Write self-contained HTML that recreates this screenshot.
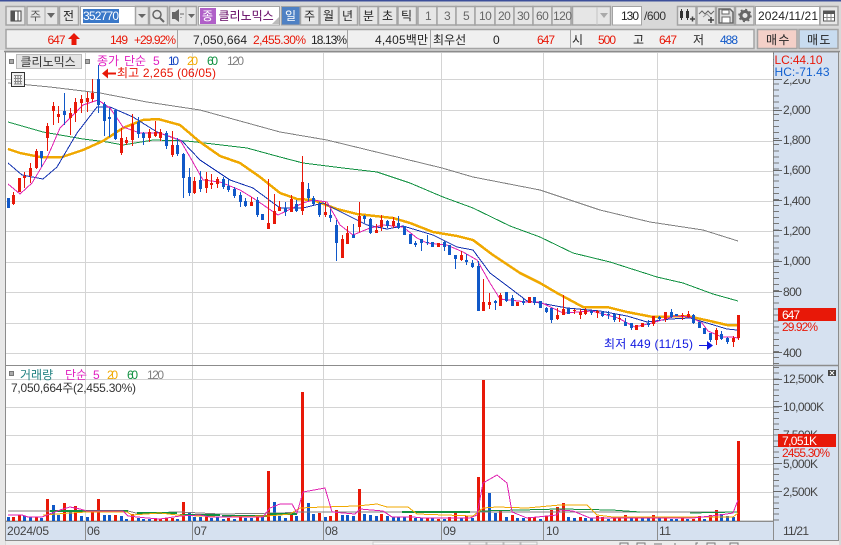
<!DOCTYPE html>
<html><head><meta charset="utf-8"><style>
html,body{margin:0;padding:0;background:#d8d8d8;width:841px;height:545px;overflow:hidden}
svg{display:block}
text{font-family:"Liberation Sans","Noto Sans CJK KR",sans-serif;font-size:12px;white-space:pre}
.n{letter-spacing:-.35px}
.a{letter-spacing:-.6px;fill:#444}
.b{fill:#e6e6e6;stroke:#a4a4a4;stroke-width:1.5}
.c{fill:#666;letter-spacing:-.5px}
.k{fill:#222}
.r{fill:#e81808}
.u{fill:#1058c8}
.l{fill:none;shape-rendering:crispEdges}
</style></head><body>
<svg width="841" height="545" viewBox="0 0 841 545" xmlns="http://www.w3.org/2000/svg">
<rect width="841" height="545" fill="#d8d8d8"/>
<rect width="841" height="1.5" fill="#3c4f9a"/>

<!-- toolbar row 1 -->
<rect class="b" x="6" y="6.5" width="19" height="18.5"/>
<path d="M11 11h10v10h-10z" fill="#fff" stroke="#444"/><path d="M11 11h4v10h-4z" fill="#555"/><path d="M18 11v10" stroke="#444"/>
<rect class="b" x="27" y="6.5" width="31" height="18.5"/>
<path d="M47 13h8l-4 5z" fill="#666"/><path d="M45 7v18" stroke="#aaa"/>
<text x="30" y="20" fill="#555">주</text>
<rect class="b" x="59.5" y="6.5" width="19" height="18.5"/><text x="63" y="20" class="k">전</text>
<rect x="80.5" y="6.5" width="55" height="18.5" fill="#fff" stroke="#a4a4a4"/>
<rect x="83" y="9" width="36" height="14" fill="#3a78c8"/>
<text x="83" y="20" fill="#fff" textLength="36">352770</text>
<rect class="b" x="135.5" y="6.5" width="13" height="18.5"/><path d="M138 14h8l-4 4z" fill="#666"/>
<rect class="b" x="149.5" y="6.5" width="18" height="18.5"/>
<circle cx="157" cy="14.5" r="4" fill="none" stroke="#666" stroke-width="1.5"/><path d="M160 18l4 4" stroke="#666" stroke-width="2"/>
<rect class="b" x="169.5" y="6.5" width="27" height="18.5"/><path d="M172 12h3l4-3v13l-4-3h-3z" fill="#666"/><path d="M181 13v2M181 17v1M183 13v2" stroke="#666"/><path d="M186 7v18" stroke="#aaa"/><path d="M188 14h7l-3.500 4z" fill="#666"/>
<rect x="198.500" y="6.500" width="81" height="18.500" fill="#fff" stroke="#a4a4a4"/>
<rect x="200" y="8" width="16" height="16" fill="#b060c8"/><text x="202" y="20" fill="#fff">종</text>
<text x="218.500" y="20" fill="#600060">클리노믹스</text>
<path d="M272 24l7-7v7z" fill="#bbb"/>
<rect x="281.500" y="6.500" width="18.500" height="18.500" fill="#4f81c4" stroke="#a4a4a4"/><text x="285" y="20" fill="#fff">일</text>
<rect class="b" x="300.500" y="6.500" width="18.500" height="18.500"/><text x="304" y="20" class="k">주</text>
<rect class="b" x="320" y="6.500" width="18.500" height="18.500"/><text x="323" y="20" class="k">월</text>
<rect class="b" x="339" y="6.500" width="18.500" height="18.500"/><text x="342" y="20" class="k">년</text>
<rect class="b" x="359.500" y="6.500" width="18.500" height="18.500"/><text x="363" y="20" class="k">분</text>
<rect class="b" x="378.500" y="6.500" width="18.500" height="18.500"/><text x="382" y="20" class="k">초</text>
<rect class="b" x="398" y="6.500" width="18.500" height="18.500"/><text x="401" y="20" class="k">틱</text>
<rect class="b" x="418" y="6.500" width="19" height="18.500"/><text x="425" y="20" class="c">1</text>
<rect class="b" x="437" y="6.500" width="19" height="18.500"/><text x="444" y="20" class="c">3</text>
<rect class="b" x="456" y="6.500" width="19" height="18.500"/><text x="463" y="20" class="c">5</text>
<rect class="b" x="475" y="6.500" width="20" height="18.500"/><text x="479" y="20" class="c">10</text>
<rect class="b" x="495" y="6.500" width="19" height="18.500"/><text x="498" y="20" class="c">20</text>
<rect class="b" x="514" y="6.500" width="19" height="18.500"/><text x="517" y="20" class="c">30</text>
<rect class="b" x="533" y="6.500" width="19" height="18.500"/><text x="536" y="20" class="c">60</text>
<rect class="b" x="552" y="6.500" width="19" height="18.500"/><text x="553" y="20" class="c">120</text>
<rect class="b" x="572.500" y="6.500" width="38" height="18.500"/><path d="M597 7v18" stroke="#c4c4c4"/><path d="M600 13h8l-4 5z" fill="#aaa"/>
<rect x="612.500" y="6.500" width="29" height="18.500" fill="#fff" stroke="#a4a4a4"/><text x="621" y="20" class="k" textLength="18">130</text>
<text x="644" y="20" fill="#333" textLength="22">/600</text>
<rect class="b" x="677.500" y="6.500" width="18.500" height="18.500"/>
<path d="M681.500 9v11M687.500 9v11" stroke="#333"/><path d="M680 11h3v7h-3zM686 11h3v7h-3z" fill="#333"/><path d="M690 19h5M692.500 16.500v5" stroke="#444" stroke-width="1.500"/>
<rect class="b" x="697" y="6.500" width="18.500" height="18.500"/>
<path d="M699 14l3-3 3 3 3-3 3 3 3-3" fill="none" stroke="#666"/><path d="M703 17l4-3 3 3" fill="none" stroke="#999"/><path d="M708 20h6M711 17v6" stroke="#444" stroke-width="1.500"/>
<rect class="b" x="716.500" y="6.500" width="18" height="18.500"/>
<path d="M719 9h11l3 3v11h-14z" fill="#ddd" stroke="#666" stroke-width="1.500"/><path d="M722 10h7v4h-7zM722 17h8v6h-8z" fill="#fff" stroke="#666"/>
<rect class="b" x="735.500" y="6.500" width="18.500" height="18.500"/>
<circle cx="745" cy="15.500" r="4" fill="none" stroke="#666" stroke-width="3"/><circle cx="745" cy="15.500" r="6" fill="none" stroke="#666" stroke-width="1.500" stroke-dasharray="2 2.700"/>
<rect x="755.500" y="6.500" width="64" height="18.500" fill="#fff" stroke="#a4a4a4"/><text x="758" y="20" class="k" textLength="60">2024/11/21</text>
<rect class="b" x="820" y="6.500" width="18" height="18.500"/>
<path d="M823.500 11h11v10h-11z" fill="#fff" stroke="#555"/><path d="M823 11h12v3h-12z" fill="#555"/><path d="M827 14v7M831 14v7M824 17.500h10" stroke="#888"/>

<!-- row 2 -->
<rect x="6" y="29.500" width="748" height="19" fill="#f0f0f0" stroke="#a4a4a4" stroke-width="1.500"/>
<path d="M177.500 30v18M347.500 30v18M430.500 30v18M570.500 30v18" stroke="#a4a4a4"/>
<g>
<text x="47.500" y="44" class="r" textLength="18">647</text>
<path d="M74 33l6 6h-3.500v6h-5v-6h-3.500z" fill="#e81808"/>
<text x="110" y="44" class="r" textLength="18">149</text><text x="134" y="44" class="r" textLength="42">+29.92%</text>
<text x="193" y="44" class="k" textLength="54">7,050,664</text><text x="253" y="44" class="r" textLength="53">2,455.30%</text><text x="311" y="44" class="k" textLength="36">18.13%</text>
<text x="375" y="44" class="k" textLength="53">4,405백만</text><text x="433" y="44" class="k">최우선</text>
<text x="493" y="44" class="k">0</text><text x="537" y="44" class="r" textLength="18">647</text>
<text x="572" y="44" class="k">시</text><text x="598" y="44" class="r" textLength="18">500</text>
<text x="633" y="44" class="k">고</text><text x="659" y="44" class="r" textLength="18">647</text>
<text x="693" y="44" class="k">저</text><text x="720" y="44" class="u" textLength="18">488</text>
</g>
<rect x="757.500" y="29.500" width="39.500" height="19" fill="#f4d0c8" stroke="#a4a4a4" stroke-width="1.500"/>
<text x="766" y="44" fill="#222" letter-spacing="-1">매 수</text>
<rect x="799" y="29.500" width="39" height="19" fill="#c8dcf0" stroke="#a4a4a4" stroke-width="1.500"/>
<text x="807" y="44" fill="#222" letter-spacing="-1">매 도</text>

<!-- chart area -->
<rect x="0" y="50" width="5" height="495" fill="#e8e8e8"/>
<rect x="6" y="52.500" width="767" height="469" fill="#fff"/>
<rect x="773" y="52.500" width="66" height="488" fill="#d6e1f0"/>
<rect x="6" y="522" width="767" height="18.500" fill="#d6e1f0"/>
<path d="M6 79.500H773M6 110.500H773M6 141.500H773M6 171.500H773M6 201.500H773M6 231.500H773M6 262.500H773M6 292.500H773M6 323.500H773M6 353.500H773M6 379.500H773M6 407.500H773M6 435.500H773M6 464.500H773M6 492.500H773M6 520.500H773M85.500 53V521M192.500 53V521M323.500 53V521M441.500 53V521M543.500 53V521M657.500 53V521" stroke="#d4d4d4" fill="none" shape-rendering="crispEdges"/>

<!-- MA lines price -->
<polyline class="l" stroke="#808080" points="8,83 50,87 100,93 147,102 200,110 280,132 327,140 442,168 473,177 540,190 600,210 650,222 703,230 738,241"/>
<polyline class="l" stroke="#109040" points="8,122 43,132 83,139 107,142 123,145 153,140 187,141 213,144 247,148 280,157 303,163 343,168 377,172 410,183 443,197 473,208 510,226 540,237 573,253 610,262 657,277 683,283 713,294 738,301"/>
<polyline class="l" stroke="#f0a800" stroke-width="2.500" points="8,149 20,153 40,157 62,157 83,150 103,141 123,128 143,120 158,119 180,125 200,142 220,156 240,163 260,177 280,193 297,199 313,200 337,209 357,214 393,218 410,223 433,232 457,236 473,240 493,255 520,273 540,283 557,293 583,307 607,307 627,312 653,317 687,316 710,321 727,325 737,325"/>
<polyline class="l" stroke="#1030b0" points="8,163 22,175 43,179 57,167 77,133 97,107 110,107 133,117 157,132 182,141 200,160 230,180 253,188 280,208 303,208 323,203 343,213 367,225 387,229 403,226 433,235 457,247 473,250 490,273 510,288 527,301 540,303 567,308 600,311 627,316 647,322 670,319 690,318 707,323 727,329 737,330"/>
<polyline class="l" stroke="#e020b0" points="8,184 20,194 32,183 47,158 60,128 83,105 98,100 110,108 123,127 140,133 160,133 180,140 190,157 203,180 220,182 240,190 253,198 278,215 303,203 313,200 327,202 340,225 353,235 370,228 383,225 403,227 417,238 427,243 447,245 463,252 477,260 490,283 500,299 527,302 540,302 563,313 592,311 618,318 635,327 652,323 675,316 690,317 702,323 708,331 722,337 732,337 738,338"/>

<!-- candles wicks -->
<path class="l" stroke="#e81808" d="M13.500 192V205M30.500 163V183M36.500 149V169M24.500 172V188M47.500 123V151M53.500 102V125M58.500 106V123M70.500 108V135M75.500 98V122M81.500 95V113M87.500 92V112M92.500 79V102M121.500 128V155M126.500 137V145M132.500 114V146M149.500 129V142M155.500 121V137M160.500 129V141M172.500 131V157M194.500 177V194M206.500 172V193M211.500 174V189M217.500 177V188M251.500 197V206M268.500 179V229M274.500 194V224M279.500 201V211M291.500 195V212M302.500 156V215M325.500 202V217M342.500 235V258M347.500 226V244M359.500 202V232M376.500 224V233M381.500 215V231M393.500 217V228M461.500 251V261M483.500 279V311M489.500 293V309M500.500 293V306M557.500 308V320M563.500 295V315M574.500 309V314M580.500 309V319M585.500 308V315M597.500 310V318M619.500 315V322M653.500 316V326M665.500 312V322M682.500 313V320M688.500 311V318M716.500 328V345M733.500 336V347M738.500 315V340"/>
<path class="l" stroke="#1058c8" d="M64.500 93V125M41.500 151V167M98.500 65V113M104.500 102V136M109.500 108V137M115.500 109V140M138.500 117V138M143.500 132V145M166.500 131V149M177.500 138V156M183.500 153V198M189.500 168V196M200.500 171V192M223.500 177V189M228.500 179V192M234.500 187V198M240.500 192V207M245.500 198V207M257.500 197V217M285.500 202V216M296.500 200V212M308.500 183V201M313.500 196V205M319.500 202V217M330.500 209V222M336.500 220V261M353.500 224V238M364.500 215V223M370.500 218V234M387.500 220V228M398.500 216V229M415.500 241V247M421.500 239V251M427.500 235V245M444.500 241V251M455.500 255V269M466.500 254V265M472.500 260V268M478.500 261V311M495.500 300V310M506.500 292V302M512.500 295V306M523.500 299V305M534.500 297V305M546.500 307V313M551.500 308V323M591.500 310V315M602.500 311V317M608.500 311V319M614.500 314V322M625.500 318V326M631.500 323V330M648.500 320V327M659.500 316V321M671.500 309V318M693.500 314V324M710.500 333V342M721.500 331V340M727.500 337V344"/>
<!-- candle bodies -->
<path class="l" stroke="#e81808" stroke-width="3" d="M13.500 195V204M19.500 178V192M24.500 176V178M30.500 168V176M36.500 151V168M47.500 126V138M53.500 106V111M58.500 114V117M70.500 113V118M75.500 102V113M81.500 99V103M87.500 98V102M92.500 93V99M121.500 138V153M126.500 140V143M132.500 124V140M149.500 132V138M155.500 132V136M160.500 132V138M172.500 145V155M194.500 181V193M206.500 179V188M211.500 183V185M217.500 179V184M251.500 202V206M268.500 223V229M274.500 211V224M279.500 207V211M291.500 199V212M302.500 182V211M325.500 212V215M342.500 239V258M347.500 233V244M359.500 216V227M376.500 230V233M381.500 220V227M393.500 221V226M438.500 243V247M461.500 255V260M483.500 302V311M489.500 302V305M500.500 295V306M517.500 302V306M529.500 297V303M557.500 315V319M563.500 309V315M574.500 310V311M580.500 312V315M585.500 310V314M597.500 311V313M619.500 318V319M636.500 325V330M642.500 323V327M653.500 316V324M665.500 312V319M682.500 315V316M688.500 314V317M716.500 330V340M733.500 338V342M738.500 315V338"/>
<path class="l" stroke="#1058c8" stroke-width="3" d="M8.500 198V208M41.500 151V158M64.500 111V115M98.500 79V105M104.500 104V121M109.500 117V119M115.500 110V139M138.500 122V134M143.500 133V138M166.500 133V146M177.500 145V154M183.500 154V178M189.500 177V193M200.500 180V189M223.500 179V187M228.500 186V190M234.500 189V196M240.500 195V202M245.500 201V206M257.500 200V215M262.500 214V220M285.500 208V212M296.500 204V211M308.500 189V198M313.500 198V204M319.500 204V215M330.500 215V218M336.500 225V243M353.500 235V238M364.500 216V219M370.500 219V233M387.500 221V226M398.500 223V228M404.500 226V235M410.500 234V244M415.500 243V245M421.500 239V243M427.500 242V243M432.500 242V247M444.500 242V247M449.500 245V255M455.500 255V259M466.500 260V262M472.500 263V267M478.500 266V311M495.500 301V303M506.500 292V301M512.500 298V306M523.500 301V303M534.500 297V303M540.500 301V308M546.500 308V312M551.500 308V320M568.500 308V314M591.500 311V313M602.500 312V316M608.500 314V315M614.500 314V320M625.500 322V326M631.500 323V328M648.500 323V325M659.500 317V319M671.500 312V317M676.500 314V316M693.500 315V323M699.500 322V328M704.500 328V334M710.500 333V340M721.500 334V339M727.500 338V342"/>

<!-- volume bars -->
<path class="l" stroke="#e81808" stroke-width="3" d="M13.500 517V521M19.500 515V521M36.500 517V521M47.500 499V521M64.500 503V521M75.500 506V521M92.500 512V521M98.500 499V521M115.500 515V521M132.500 514V521M155.500 519V521M160.500 519V521M166.500 518V521M172.500 518V521M183.500 502V521M206.500 516V521M228.500 518V521M240.500 517V521M257.500 517V521M268.500 471V521M291.500 515V521M302.500 392V521M319.500 513V521M330.500 516V521M336.500 510V521M359.500 489V521M381.500 514V521M410.500 515V521M427.500 518V521M438.500 519V521M449.500 517V521M455.500 513V521M466.500 516V521M478.500 477V521M483.500 380V521M500.500 511V521M512.500 515V521M529.500 517V521M534.500 517V521M546.500 516V521M551.500 510V521M557.500 507V521M563.500 503V521M580.500 517V521M597.500 516V521M602.500 517V521M614.500 517V521M619.500 517V521M625.500 515V521M636.500 518V521M653.500 515V521M665.500 518V521M682.500 518V521M693.500 519V521M699.500 516V521M710.500 515V521M716.500 510V521M738.500 441V521"/>
<path class="l" stroke="#1058c8" stroke-width="3" d="M8.500 517V521M24.500 516V521M30.500 517V521M41.500 518V521M53.500 505V521M58.500 515V521M70.500 512V521M81.500 516V521M87.500 517V521M104.500 515V521M109.500 515V521M121.500 516V521M126.500 519V521M138.500 518V521M143.500 519V521M149.500 519V521M177.500 519V521M189.500 513V521M194.500 517V521M200.500 517V521M211.500 518V521M217.500 517V521M223.500 519V521M234.500 519V521M245.500 518V521M251.500 518V521M262.500 517V521M274.500 502V521M279.500 516V521M285.500 518V521M296.500 516V521M308.500 503V521M313.500 514V521M325.500 517V521M342.500 515V521M347.500 515V521M353.500 516V521M364.500 514V521M370.500 515V521M376.500 516V521M387.500 516V521M393.500 517V521M398.500 517V521M404.500 517V521M415.500 518V521M421.500 518V521M432.500 518V521M444.500 519V521M461.500 518V521M472.500 518V521M489.500 493V521M495.500 513V521M506.500 517V521M517.500 518V521M523.500 518V521M540.500 519V521M568.500 517V521M574.500 518V521M585.500 518V521M591.500 518V521M608.500 519V521M631.500 518V521M642.500 518V521M648.500 518V521M659.500 518V521M671.500 519V521M676.500 519V521M687.500 519V521M704.500 519V521M721.500 514V521M727.500 516V521M733.500 517V521"/>

<!-- volume MAs -->
<polyline class="l" stroke="#808080" points="8,511 128,511 136,513 180,512 220,514 280,513 300,512 737,512"/>
<path class="l" stroke="#109040" stroke-width="2" d="M50 511H128M137 513H177M180 515H220M222 516H267M270 514H297M402 512H470"/><path class="l" stroke="#109040" d="M480 511L560 509L612 510L640 512M690 513L737 512"/>
<polyline class="l" stroke="#f0a800" points="43,515 70,513 87,512 127,512 132,515 160,513 177,515 200,516 220,517 267,516 280,515 290,514 300,508 323,507 357,506 377,504 387,507 408,507 417,514 473,516 483,508 497,507 527,508 560,505 587,505 597,515 613,517 667,517 733,517 738,513"/>
<polyline class="l" stroke="#e020b0" points="8,515 22,515 28,517 42,517 60,510 70,507 80,509 87,511 123,511 128,516 147,518 160,519 180,516 200,515 210,517 263,517 270,508 280,504 292,504 297,513 303,492 325,488 332,512 355,514 360,509 383,511 392,517 413,517 423,518 470,518 477,515 483,483 497,475 507,483 512,512 527,518 557,515 560,510 573,511 590,518 660,518 693,518 720,515 733,513 738,500"/>

<!-- frames -->
<path d="M5.500 51V541M5 52H839M6 365.500H773M5 521.500H773M773.500 52V541M838.500 52V541M5 540.500H839M85.500 522V540M192.500 522V540M323.500 522V540M441.500 522V540M543.500 522V540M657.500 522V540" stroke="#8c8c8c" fill="none" stroke-width="1" shape-rendering="crispEdges"/>
<path d="M4 51.500H840M773 365.500H838" stroke="#8c8c8c" stroke-width="1.500" fill="none"/>

<!-- axis ticks -->
<line x1="776" x2="776" y1="53" y2="365" stroke="#777" stroke-width="6" stroke-dasharray="1 5.080" shape-rendering="crispEdges"/>
<line x1="776" x2="776" y1="367" y2="521" stroke="#777" stroke-width="6" stroke-dasharray="1 4.640" shape-rendering="crispEdges"/>
<path d="M773 79.500h9M773 110.500h9M773 140.500h9M773 170.500h9M773 200.500h9M773 230.500h9M773 261.500h9M773 291.500h9M773 352.500h9M773 379.500h9M773 406.500h9M773 463.500h9M773 491.500h9" stroke="#666" shape-rendering="crispEdges"/>
<g class="a">
<text x="783" y="84" class="a">2,200</text>
<text x="783" y="114" class="a">2,000</text>
<text x="783" y="144" class="a">1,800</text>
<text x="783" y="174" class="a">1,600</text>
<text x="783" y="205" class="a">1,400</text>
<text x="783" y="235" class="a">1,200</text>
<text x="783" y="265" class="a">1,000</text>
<text x="783" y="296" class="a">800</text>
<text x="783" y="357" class="a">400</text>
<text x="783" y="383" class="a">12,500K</text>
<text x="783" y="411" class="a">10,000K</text>
<text x="783" y="439" class="a">7,500K</text>
<text x="783" y="468" class="a">5,000K</text>
<text x="783" y="496" class="a">2,500K</text>
</g>
<rect x="774" y="53" width="64" height="26" fill="#d6e1f0"/>
<text x="774.500" y="64" fill="#e81808" textLength="48">LC:44.10</text>
<text x="774.500" y="76" fill="#1060d0" textLength="55">HC:-71.43</text>
<rect x="778" y="308" width="58" height="13" fill="#e81808"/>
<text x="782" y="319" fill="#fff" textLength="18">647</text>
<text x="782" y="331" class="r" textLength="36">29.92%</text>
<rect x="778" y="434" width="58" height="13" fill="#e81808"/>
<text x="782" y="445" fill="#fff" textLength="35">7,051K</text>
<text x="782" y="457" class="r" textLength="48">2455.30%</text>
<rect x="828" y="370" width="8" height="6" fill="#444"/><path d="M830 371l4 4M834 371l-4 4" stroke="#fff"/>

<!-- legends -->
<rect x="9.500" y="59.500" width="4" height="4" fill="#aaa" stroke="#777"/>
<rect x="16.500" y="54.500" width="65" height="14" fill="#e4e4e4" stroke="#bbb"/>
<text x="20.500" y="66" fill="#333">클리노믹스</text>
<rect x="85.500" y="59.500" width="4" height="4" fill="#aaa" stroke="#777"/>
<text x="97" y="65" fill="#e020c0">종가</text><text x="124" y="65" fill="#e020c0">단순</text><text x="153" y="65" fill="#e020c0">5</text>
<text x="168" y="65" fill="#1040c0" textLength="11">10</text><text x="187" y="65" fill="#f0a800" textLength="11">20</text><text x="207" y="65" fill="#109040" textLength="11">60</text><text x="227" y="65" fill="#808080" textLength="17">120</text>
<rect x="11.500" y="72.500" width="13" height="14" fill="#f0f0f0" stroke="#333"/>
<path d="M14 75.500h8M14 78.500h8M14 81.500h8M14 84h8M15.500 75v9M18 75v9M20.500 75v9" stroke="#888"/>
<path d="M102 73.500l6-5v4h8v2h-8v4z" fill="#e81808"/>
<text x="117" y="77" class="r" textLength="99">최고 2,265 (06/05)</text>
<text x="604" y="348" fill="#1018e0" textLength="89">최저 449 (11/15)</text>
<path d="M699 345h8v-4l6 4.500-6 4.500v-4h-8z" fill="#1018e0"/>
<rect x="9.500" y="371.500" width="4" height="4" fill="#aaa" stroke="#777"/>
<text x="20" y="379" fill="#208080">거래량</text><text x="65" y="379" fill="#e020c0">단순</text><text x="93" y="379" fill="#e020c0">5</text>
<text x="107" y="379" fill="#f0a800" textLength="11">20</text><text x="127" y="379" fill="#109040" textLength="11">60</text><text x="147" y="379" fill="#808080" textLength="17">120</text>
<text x="11" y="392" fill="#333" textLength="125">7,050,664주(2,455.30%)</text>

<!-- dates -->
<g fill="#444">
<text x="7" y="535" fill="#444" textLength="42">2024/05</text>
<text x="87" y="535" fill="#444" class="n">06</text>
<text x="194" y="535" fill="#444" class="n">07</text>
<text x="325" y="535" fill="#444" class="n">08</text>
<text x="443" y="535" fill="#444" class="n">09</text>
<text x="546" y="535" fill="#444" class="n">10</text>
<text x="659" y="535" fill="#444" class="n">11</text>
<text x="783" y="535" fill="#444" textLength="26">11/21</text>
</g>

<!-- bottom strip -->
<rect x="6" y="541" width="833" height="4" fill="#ececec"/>
<rect x="373" y="542" width="96" height="3" fill="#f8f8f8" stroke="#ccc"/>
<rect x="470" y="542" width="16" height="3" fill="#f4f4f4" stroke="#bbb"/><rect x="487" y="542" width="16" height="3" fill="#f4f4f4" stroke="#bbb"/><rect x="504" y="542" width="16" height="3" fill="#f4f4f4" stroke="#bbb"/><rect x="521" y="542" width="16" height="3" fill="#f4f4f4" stroke="#bbb"/>
<path d="M620 545v-2h8v2M637 545v-2h8v2M654 544h8M675 545v-2M696 545v-2h2M707 545v-2h8v2M730 545v-2h8v2" stroke="#777" fill="none"/>
</svg>
</body></html>
